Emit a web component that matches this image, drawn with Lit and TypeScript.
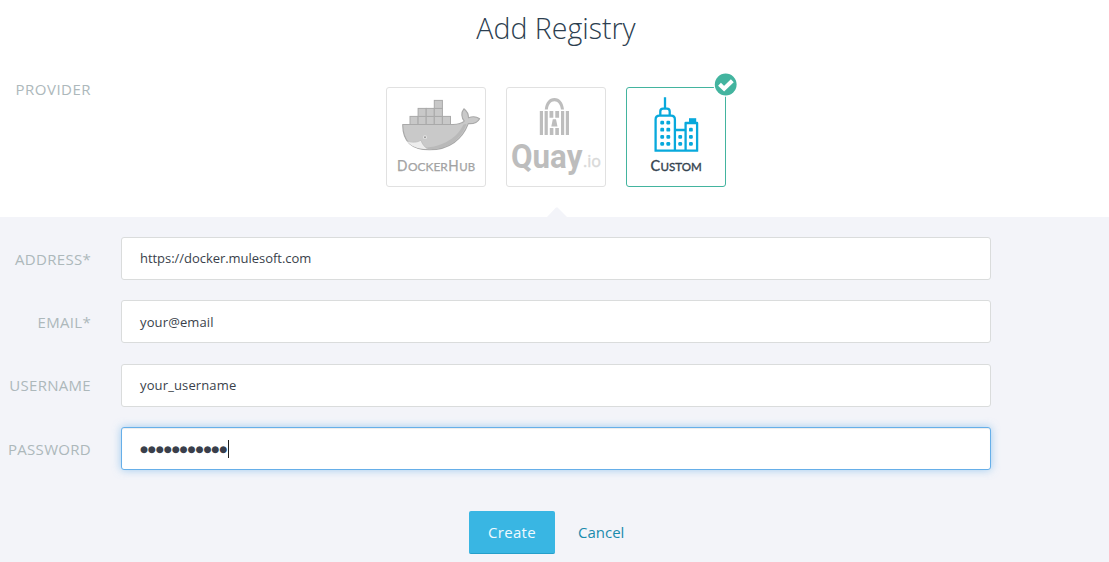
import { LitElement, html, css, svg } from "lit";
import { customElement, property } from "lit/decorators.js";
import { classMap } from "lit/directives/class-map.js";

const dockerLogo = html`
  <svg class="art" viewBox="387 88 98 98" role="img" aria-label="DockerHub">
    <path fill="#c9c9c9" stroke="#a9a9a9" stroke-width="1.1" stroke-linejoin="round"
      d="M402.7 124.5H453C457.5 124.5 461.5 124 464.3 121.2C461.5 118 460.8 112.5 463.9 108.8C467 111.3 468.6 114 468.5 117.8C472.3 116.2 476.5 116.6 479.6 118.7C477.5 122.5 473.8 124 468.3 123.6C462.5 139 449.5 149.8 429.5 149.8C411 149.8 402.7 141 402.7 124.5Z"/>
    <path fill="#b9b9b9" d="M466.5 124C461 139 449 149.2 429.5 149.2C426 149.2 423 148.7 420.5 148.2C440 147.5 456 140 463.5 124.5Z"/>
    <path fill="#ededed" d="M407 141C412 142.7 417 142.5 421 140.2C422 144 424.5 147 428 149.1C418 149.2 411 146.5 407 141Z"/>
    <path fill="none" stroke="#b4b4b4" stroke-width=".6" d="M406.8 141C413 143 417 142.5 421 140.2C422 144 424.5 147 428 149.3"/>
    <circle cx="425" cy="137.2" r="1.9" fill="#e6e6e6"/>
    <circle cx="425" cy="137.2" r="1" fill="#969696"/>
    <g fill="#c8c8c8" stroke="#a9a9a9" stroke-width="1">
      ${[0, 1, 2, 3, 4].map((i) => svg`<rect x=${410 + i * 8.1} y="116.4" width="8.1" height="8.1"/>`)}
      ${[0, 1, 2].map((i) => svg`<rect x=${418.1 + i * 8.1} y="108.4" width="8.1" height="8"/>`)}
      <rect x="434.3" y="100.4" width="8.1" height="8"/>
    </g>
    <g class="lato" fill="#a3a3a3" stroke="#a3a3a3" stroke-width=".25">
      <text x="397" y="171" font-size="14.5" textLength="10.4" lengthAdjust="spacingAndGlyphs">D</text>
      <text x="408" y="171" font-size="11.2" textLength="39.8" lengthAdjust="spacingAndGlyphs">OCKER</text>
      <text x="448.2" y="171" font-size="14.5" textLength="10.4" lengthAdjust="spacingAndGlyphs">H</text>
      <text x="459.3" y="171" font-size="11.2" textLength="15.8" lengthAdjust="spacingAndGlyphs">UB</text>
    </g>
  </svg>`;

const quayLogo = html`
  <svg class="art" viewBox="507 88 98 98" role="img" aria-label="Quay.io">
    <g fill="#bdbdbd">
      <path d="M544.8 109.5C545.5 102.5 549 98 554.4 98S563.3 102.5 564 109.5H561C560.3 104.3 558 101.2 554.4 101.2S548.5 104.3 547.8 109.5Z"/>
      <path d="M539.8 111h3.2v24h-3.2zM544.6 111h3.2v24h-3.2zM561 111h3.2v24H561zM565.8 111h3.2v24h-3.2z"/>
      <path d="M549.5 111h3.8v6.8h-3.8zM555.3 111h3.8v6.8h-3.8zM549.8 128h3.6v7h-3.6zM555.3 128h3.6v7h-3.6zM552.8 119.3h3.2l1.5 7.2h-6.2z"/>
    </g>
    <text class="quay" x="511" y="167.5" font-size="32.5" fill="#bdbdbd" textLength="71.4" lengthAdjust="spacingAndGlyphs">Quay</text>
    <text class="open" x="583" y="167" font-size="15.5" fill="#d9d9d9" stroke="#d9d9d9" stroke-width=".4" textLength="18" lengthAdjust="spacingAndGlyphs">.io</text>
  </svg>`;

const customLogo = html`
  <svg class="art" viewBox="627 88 98 98" role="img" aria-label="Custom">
    <g fill="none" stroke="#08a9dc" stroke-width="2.3" stroke-linejoin="round">
      <path d="M665 97.2V108.5M660.3 115.5V111.5Q660.3 108.6 663 108.6H667Q669.7 108.6 669.7 111.5V115.5"/>
      <path d="M655.6 150.7V119.5Q655.6 115.6 659.5 115.6H671Q674.9 115.6 674.9 119.5V150.7M674.9 130H685.5M685.6 150.7V123H697.1V150.7M654.5 150.7H698.2"/>
    </g>
    <g fill="#08a9dc">
      <path d="M689 118.2h7.2v4h-7.2z"/>
      ${[122.6, 129.7, 136.8, 143.9].map((y) => [662.2, 668.3].map((x) => svg`<rect x=${x - 1.9} y=${y - 1.9} width="3.8" height="3.8" rx="1.2"/>`))}
      ${[136.8, 143.9].map((y) => svg`<rect x="678.3" y=${y - 1.9} width="3.8" height="3.8" rx="1.2"/>`)}
      ${[129.7, 136.8, 143.9].map((y) => svg`<rect x="689" y=${y - 1.9} width="3.8" height="3.8" rx="1.2"/>`)}
    </g>
    <g class="lato" fill="#34434f" stroke="#34434f" stroke-width=".35">
      <text x="650.6" y="171" font-size="14.5" textLength="9.6" lengthAdjust="spacingAndGlyphs">C</text>
      <text x="660.5" y="171" font-size="11.2" textLength="41.3" lengthAdjust="spacingAndGlyphs">USTOM</text>
    </g>
  </svg>`;

@customElement("provider-card")
class ProviderCard extends LitElement {
  @property({ type: Boolean }) selected = false;
  @property({ attribute: false }) art: unknown;

  static styles = css`
    :host { display: block; }
    .card {
      position: relative; box-sizing: border-box; width: 100px; height: 100px;
      border: 1px solid #e1e1e1; border-radius: 3px; background: #fff;
    }
    .selected { border-color: #43b49f; }
    .art { display: block; width: 98px; height: 98px; }
    .lato { font-family: Lato, sans-serif; }
    .quay { font-family: Roboto, sans-serif; font-weight: 700; }
    .open { font-family: "Open Sans", sans-serif; }
    .badge { position: absolute; top: -16px; right: -13px; width: 25px; height: 25px; }
  `;

  render() {
    return html`<div class=${classMap({ card: true, selected: this.selected })}>
      ${this.art}
      ${this.selected
        ? html`<svg class="badge" viewBox="0 0 25 25">
            <circle cx="12.7" cy="12.5" r="12.2" fill="#fff"/>
            <circle cx="12.7" cy="12.5" r="10.9" fill="#43b49f"/>
            <path d="M6.5 12.3L11.1 16.7L19.3 8.7" fill="none" stroke="#fff" stroke-width="4.1"/>
          </svg>`
        : null}
    </div>`;
  }
}

@customElement("form-field")
class FormField extends LitElement {
  @property() label = "";
  @property() value = "";
  @property({ type: Boolean }) secret = false;

  static styles = css`
    :host { display: block; font-family: "Open Sans", sans-serif; }
    .row { display: grid; grid-template-columns: 91px 870px; column-gap: 30px; align-items: center; }
    .label { text-align: right; font-size: 15px; line-height: 20px; letter-spacing: .3px; color: #adb8bb; padding-top: .4px; white-space: nowrap; }
    .box {
      box-sizing: border-box; height: 43px; padding: 0 18px; display: flex; align-items: center;
      border: 1px solid #dadcdc; border-radius: 3px; background: #fff; color: #3a3f4b; font-size: 13px;
    }
    .value { line-height: 18px; padding-bottom: .4px; letter-spacing: .13px; }
    .url { letter-spacing: -.04px; }
    .focused { border-color: #66afe9; box-shadow: inset 0 1px 1px rgba(0,0,0,.075), 0 0 8px rgba(102,175,233,.6); }
    .dots { font-family: "DejaVu Sans", sans-serif; font-size: 9.1px; line-height: 18px; padding: 1px 0 0 .2px; width: 87.8px; letter-spacing: 0; white-space: nowrap; }
    .caret { width: 1px; height: 18px; margin-top: 1px; background: #222; }
  `;

  render() {
    return html`<div class="row">
      <div class="label">${this.label}</div>
      <div class=${classMap({ box: true, focused: this.secret })}>
        ${this.secret
          ? html`<span class="dots">${"●".repeat(11)}</span><span class="caret"></span>`
          : html`<span class=${classMap({ value: true, url: this.value.startsWith("http") })}>${this.value}</span>`}
      </div>
    </div>`;
  }
}

@customElement("app-root")
class AppRoot extends LitElement {
  static styles = css`
    :host {
      display: flex; flex-direction: column; height: 562px; overflow: hidden;
      background: #fff; font-family: "Open Sans", sans-serif;
    }
    .top { box-sizing: border-box; height: 217px; display: flex; flex-direction: column; }
    .title {
      margin: 0; padding: 8px 0 0 3px; height: 71px; text-align: center; font-size: 28.5px;
      line-height: 40px; font-weight: 300; color: #2c3e50;
    }
    .providers { display: grid; grid-template-columns: 91px 1fr; }
    .label { text-align: right; font-size: 15px; line-height: 20px; letter-spacing: .48px; color: #adb8bb; }
    .cards { display: flex; gap: 20px; padding: 8px 0 0 295px; }
    .panel { flex: 1; background: #f3f4f9; position: relative; padding-top: 20px; }
    .pointer { position: absolute; left: 547px; top: -10px; width: 20px; height: 10px; }
    .fields { display: flex; flex-direction: column; gap: 20.33px; }
    .actions { display: flex; padding: 41px 0 0 469px; gap: 23px; align-items: center; }
    .create {
      box-sizing: border-box; width: 86px; height: 43px; border: 0; border-bottom: 1px solid #259fca;
      border-radius: 2px; background: #39b6e3; color: #f0faff; font: 15px "Open Sans", sans-serif;
      letter-spacing: .3px; padding: 0;
    }
    .cancel { color: #1b8bad; font-size: 15px; line-height: 20px; }
  `;

  render() {
    return html`
      <div class="top">
        <h1 class="title">Add Registry</h1>
        <div class="providers">
          <div class="label">PROVIDER</div>
          <div class="cards">
            <provider-card .art=${dockerLogo}></provider-card>
            <provider-card .art=${quayLogo}></provider-card>
            <provider-card .art=${customLogo} selected></provider-card>
          </div>
        </div>
      </div>
      <div class="panel">
        <svg class="pointer" viewBox="0 0 20 10"><path d="M0 10L9 .6H10.6L20 10Z" fill="#f3f4f9"/></svg>
        <div class="fields">
          <form-field label="ADDRESS*" value="https://docker.mulesoft.com"></form-field>
          <form-field label="EMAIL*" value="your@email"></form-field>
          <form-field label="USERNAME" value="your_username"></form-field>
          <form-field label="PASSWORD" secret></form-field>
        </div>
        <div class="actions">
          <button class="create">Create</button>
          <span class="cancel">Cancel</span>
        </div>
      </div>`;
  }
}
